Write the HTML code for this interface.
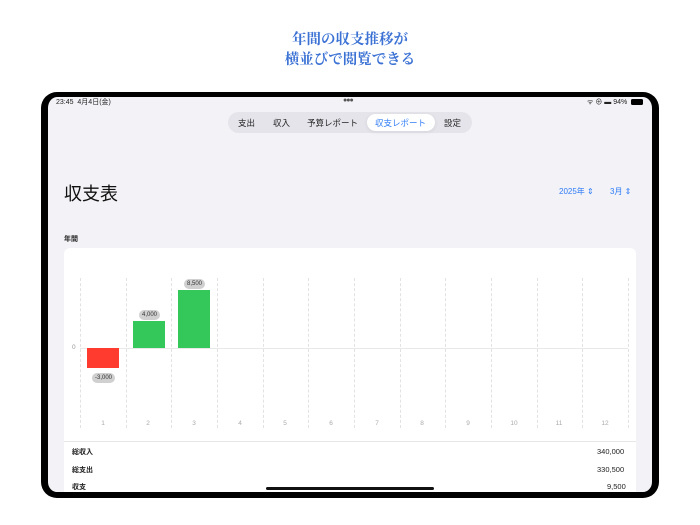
<!DOCTYPE html>
<html><head><meta charset="utf-8"><style>
*{margin:0;padding:0;box-sizing:border-box}
body{width:700px;height:525px;background:#fff;position:relative;overflow:hidden;font-family:"Liberation Sans","Noto Sans CJK JP",sans-serif}
.ab{position:absolute}
.hd{left:0;width:700px;text-align:center;font-family:"Liberation Serif","Noto Serif CJK SC",serif;font-weight:bold;color:#3b72d4;font-size:14.5px;line-height:20px}
.frame{left:41px;top:92px;width:618px;height:406px;border:solid #000;border-width:5px 7px 6px 7px;border-radius:16px;z-index:5}
.scr{left:45px;top:95px;width:610px;height:400px;background:#f2f2f7;border-radius:12px}
.t{font-size:8.5px;color:#222;white-space:nowrap}
.vl{top:278px;height:150px;border-left:1px dashed #e2e2e2}
.bl{position:absolute;background:#d0d0d0;border-radius:5px;font-size:6px;color:#333;padding:1px 3px;line-height:8px}
.xl{top:420px;font-size:6.5px;color:#aaa;width:20px;text-align:center}
</style></head><body>
<div class="ab hd" style="top:30px">年間の収支推移が</div>
<div class="ab hd" style="top:50px">横並びで閲覧できる</div>
<div class="ab scr"></div>
<div class="ab frame"></div>
<div class="ab t" style="left:56px;top:97px;font-size:7px">23:45&nbsp; 4月4日(金)</div>
<div class="ab t" style="left:343px;top:97px;font-size:7px;color:#555;letter-spacing:-1px">●●●</div>
<div class="ab t" style="left:587px;top:97px;font-size:7px">ᯤ ⊕ ▬ 94%</div>
<div class="ab" style="left:631px;top:99px;width:12px;height:6px;background:#000;border-radius:1.5px"></div>
<div class="ab" style="left:228px;top:112px;width:244px;height:21px;background:#e4e4ea;border-radius:11px"></div>
<div class="ab" style="left:367px;top:114px;width:68px;height:17px;background:#fff;border-radius:9px;box-shadow:0 1px 4px rgba(0,0,0,.08)"></div>
<div class="ab t" style="left:238px;top:117px;font-size:8.5px">支出</div>
<div class="ab t" style="left:273px;top:117px;font-size:8.5px">収入</div>
<div class="ab t" style="left:307px;top:117px;font-size:8.5px">予算レポート</div>
<div class="ab t" style="left:375px;top:117px;font-size:8.5px;color:#2f7cf6">収支レポート</div>
<div class="ab t" style="left:444px;top:117px;font-size:8.5px">設定</div>
<div class="ab t" style="left:64px;top:180px;font-size:18px;color:#111">収支表</div>
<div class="ab t" style="left:559px;top:186px;font-size:8px;color:#2f7cf6">2025年 ⇕</div>
<div class="ab t" style="left:610px;top:186px;font-size:8px;color:#2f7cf6">3月 ⇕</div>
<div class="ab t" style="left:64px;top:234px;font-size:7px;font-weight:bold">年間</div>
<div class="ab" style="left:64px;top:248px;width:572px;height:246px;background:#fff;border-radius:6px 6px 0 0"></div>
<div class="ab vl" style="left:80px"></div><div class="ab vl" style="left:126px"></div><div class="ab vl" style="left:171px"></div><div class="ab vl" style="left:217px"></div><div class="ab vl" style="left:263px"></div><div class="ab vl" style="left:308px"></div><div class="ab vl" style="left:354px"></div><div class="ab vl" style="left:400px"></div><div class="ab vl" style="left:445px"></div><div class="ab vl" style="left:491px"></div><div class="ab vl" style="left:537px"></div><div class="ab vl" style="left:582px"></div><div class="ab vl" style="left:628px"></div>
<div class="ab" style="left:80px;top:348px;width:548px;height:1px;background:#e8e8e8"></div>
<div class="ab t" style="left:72px;top:344px;font-size:6.5px;color:#999">0</div>
<div class="ab" style="left:87px;top:348px;width:32px;height:20px;background:#ff3b30"></div>
<div class="ab" style="left:133px;top:321px;width:32px;height:27px;background:#34c759"></div>
<div class="ab" style="left:178px;top:290px;width:32px;height:58px;background:#34c759"></div>
<div class="bl" style="left:92px;top:373px">-3,000</div>
<div class="bl" style="left:139px;top:310px">4,000</div>
<div class="bl" style="left:184px;top:279px">8,500</div>
<div class="ab xl" style="left:93px">1</div><div class="ab xl" style="left:138px">2</div><div class="ab xl" style="left:184px">3</div><div class="ab xl" style="left:230px">4</div><div class="ab xl" style="left:275px">5</div><div class="ab xl" style="left:321px">6</div><div class="ab xl" style="left:367px">7</div><div class="ab xl" style="left:412px">8</div><div class="ab xl" style="left:458px">9</div><div class="ab xl" style="left:504px">10</div><div class="ab xl" style="left:549px">11</div><div class="ab xl" style="left:595px">12</div>
<div class="ab" style="left:64px;top:441px;width:572px;height:1px;background:#e6e6e6"></div>
<div class="ab t" style="left:72px;top:447px;font-size:7px;font-weight:bold">総収入</div>
<div class="ab t" style="left:597px;top:447px;font-size:7.5px">340,000</div>
<div class="ab t" style="left:72px;top:465px;font-size:7px;font-weight:bold">総支出</div>
<div class="ab t" style="left:597px;top:465px;font-size:7.5px">330,500</div>
<div class="ab t" style="left:72px;top:482px;font-size:7px;font-weight:bold">収支</div>
<div class="ab t" style="left:607px;top:482px;font-size:7.5px">9,500</div>
<div class="ab" style="left:266px;top:487px;width:168px;height:3px;background:#111;border-radius:2px;z-index:6"></div>
</body></html>
